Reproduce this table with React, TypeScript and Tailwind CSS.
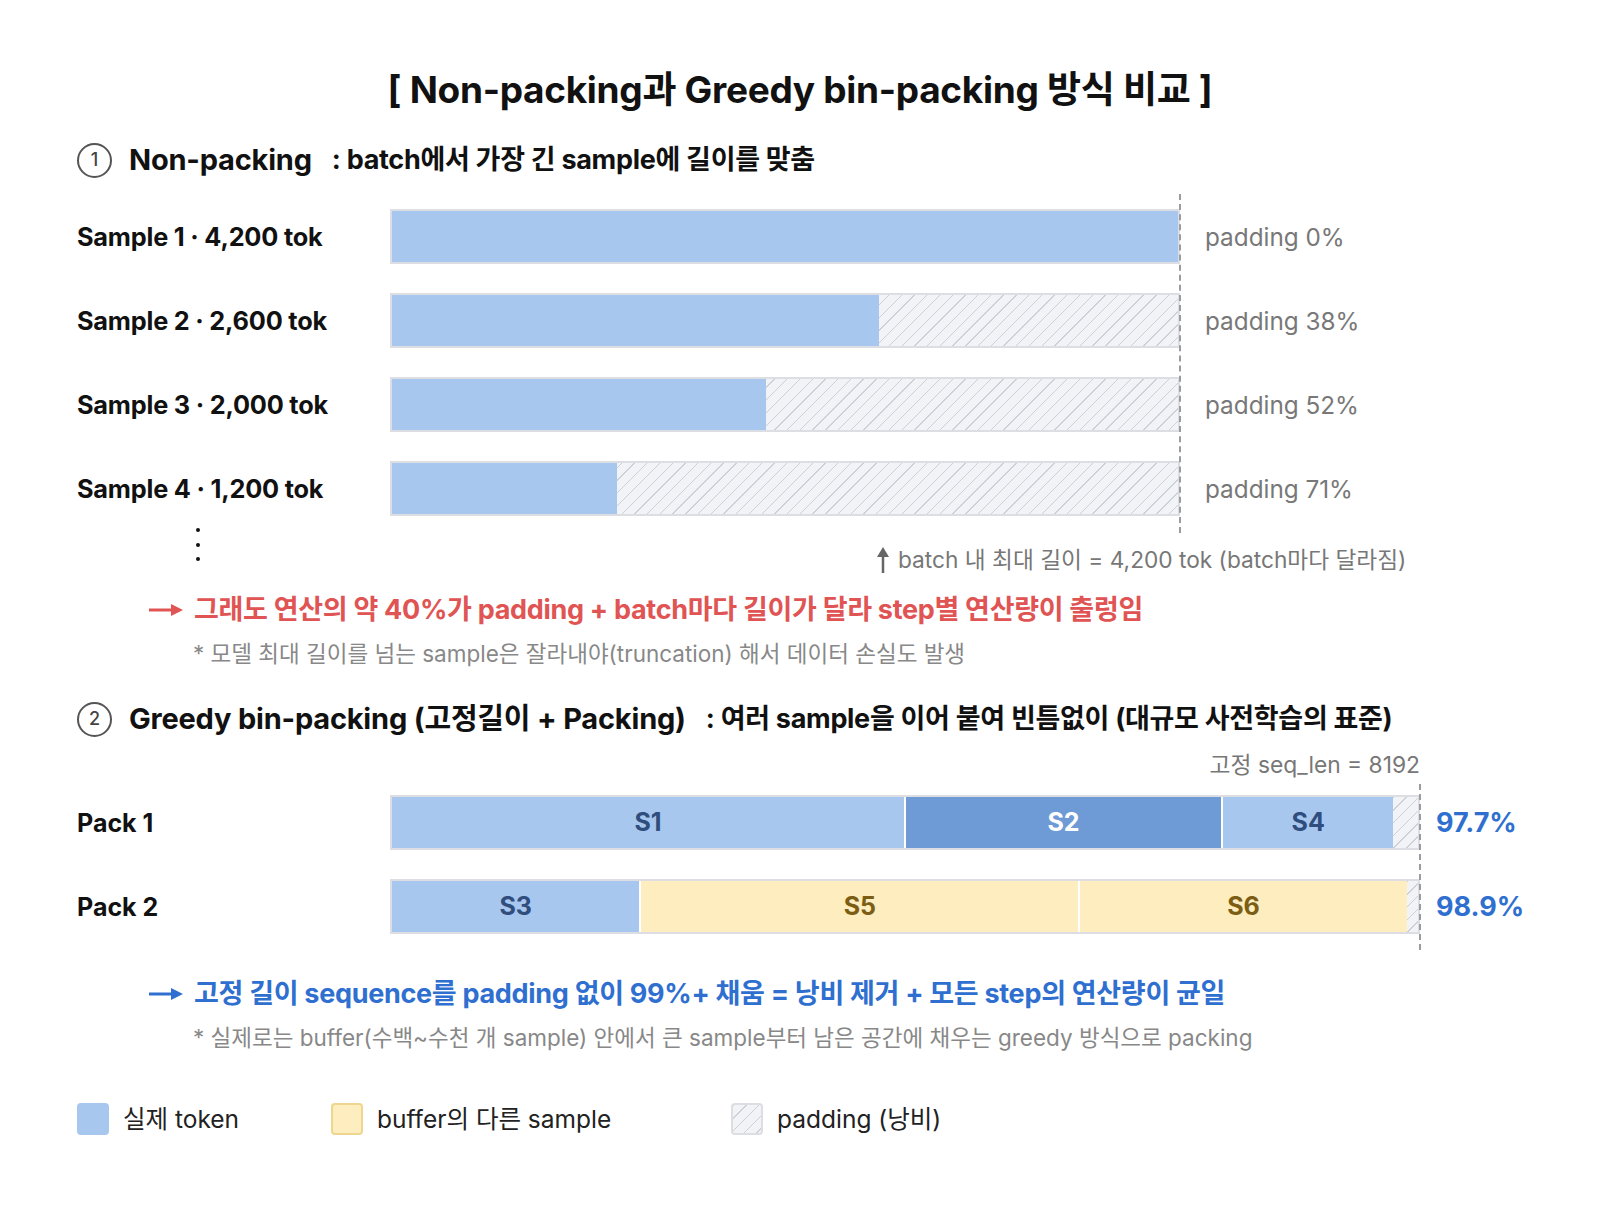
import type { ReactNode } from "react"

// 비교 도식: non-packing(샘플별 padding) vs greedy bin-packing(고정 길이 seq)

interface Seg {
  label?: string
  pct: number
  kind: "real" | "dark" | "buffer" | "pad"
}

const SAMPLES = [
  { name: "Sample 1 · 4,200 tok", real: 100, pad: "padding 0%" },
  { name: "Sample 2 · 2,600 tok", real: 62, pad: "padding 38%" },
  { name: "Sample 3 · 2,000 tok", real: 47.6, pad: "padding 52%" },
  { name: "Sample 4 · 1,200 tok", real: 28.6, pad: "padding 71%" },
]

const PACKS: { name: string; fill: string; segs: Seg[] }[] = [
  {
    name: "Pack 1",
    fill: "97.7%",
    segs: [
      { label: "S1", pct: 49.9, kind: "real" },
      { label: "S2", pct: 30.9, kind: "dark" },
      { label: "S4", pct: 16.8, kind: "real" },
      { pct: 2.4, kind: "pad" },
    ],
  },
  {
    name: "Pack 2",
    fill: "98.9%",
    segs: [
      { label: "S3", pct: 24.1, kind: "real" },
      { label: "S5", pct: 42.8, kind: "buffer" },
      { label: "S6", pct: 32, kind: "buffer" },
      { pct: 1.1, kind: "pad" },
    ],
  },
]

const HATCH =
  "bg-[repeating-linear-gradient(135deg,#cdd0d6_0px,#cdd0d6_1px,#f2f3f6_1px,#f2f3f6_9px)]"

const SEG_CLASS: Record<Seg["kind"], string> = {
  real: "bg-[#a8c7ef] text-[#2f4e7d]",
  dark: "bg-[#6e9bd5] text-white",
  buffer: "bg-[#fdedbf] text-[#7b5e14]",
  pad: HATCH,
}

function Circled({ n }: { n: number }) {
  return (
    <span className="flex h-[35px] w-[35px] shrink-0 items-center justify-center rounded-full border-2 border-[#555] text-[18px] font-medium leading-none text-[#444]">
      {n}
    </span>
  )
}

function Arrow({ color }: { color: string }) {
  return (
    <svg width="34" height="14" viewBox="0 0 34 14" className="shrink-0">
      <line x1="0" y1="7" x2="24" y2="7" stroke={color} strokeWidth="3" />
      <path d="M22 1 L34 7 L22 13 Z" fill={color} />
    </svg>
  )
}

function Header({ n, title, desc }: { n: number; title: string; desc: ReactNode }) {
  return (
    <div className="flex h-[40px] items-center leading-[40px]">
      <Circled n={n} />
      <span className="ml-[17px] text-[29px] font-bold tracking-[-0.2px] text-[#111]">{title}</span>
      <span className="ml-[20px] text-[27px] font-bold tracking-[-0.3px] text-[#111]">{desc}</span>
    </div>
  )
}

export default function App() {
  return (
    <div className="h-[1212px] w-[1600px] bg-white font-[Inter,'Noto_Sans_CJK_KR',sans-serif] text-[#111]">
      <div className="pt-[68px] text-center text-[37px] font-bold leading-[44px] tracking-[-0.3px]">
        [ Non-packing과 Greedy bin-packing 방식 비교 ]
      </div>

      <div className="pl-[77px]">
        {/* ① non-packing */}
        <div className="mt-[28px]">
          <Header n={1} title="Non-packing" desc=": batch에서 가장 긴 sample에 길이를 맞춤" />
        </div>

        <div className="relative mt-[29px] flex flex-col gap-[29px]">
          {SAMPLES.map((s) => (
            <div key={s.name} className="flex h-[55px] items-center">
              <span className="w-[313px] shrink-0 text-[25.3px] font-bold leading-[32px] tracking-[-0.2px]">{s.name}</span>
              <div className={`flex h-full w-[790px] border-2 border-[#dcdee3] ${HATCH}`}>
                <div className="h-full bg-[#a8c7ef]" style={{ width: `${s.real}%` }} />
              </div>
              <span className="ml-[25px] text-[24.3px] leading-[32px] text-[#787878]">{s.pad}</span>
            </div>
          ))}
          <div className="absolute -bottom-[17px] -top-[15px] left-[1102px] border-l-2 border-dashed border-[#9a9ca2]" />
        </div>

        <div className="mt-[12px] flex items-start">
          <div className="ml-[119px] flex flex-col gap-[10.5px]">
            <span className="h-[4px] w-[4px] rounded-full bg-[#111]" />
            <span className="h-[4px] w-[4px] rounded-full bg-[#111]" />
            <span className="h-[4px] w-[4px] rounded-full bg-[#111]" />
          </div>
          <div className="ml-[676px] mt-[18px] flex h-[28px] items-center gap-[8px] text-[22.7px] leading-[28px] text-[#777]">
            <svg width="14" height="26" viewBox="0 0 14 26" className="shrink-0">
              <line x1="7" y1="8" x2="7" y2="26" stroke="#666" strokeWidth="2.5" />
              <path d="M1 10 L7 0 L13 10 Z" fill="#666" />
            </svg>
            <span>batch 내 최대 길이 = 4,200 tok (batch마다 달라짐)</span>
          </div>
        </div>

        <div className="ml-[72px] mt-[20px] flex h-[32px] items-center gap-[11px]">
          <Arrow color="#e05454" />
          <span className="text-[27px] font-bold leading-[32px] tracking-[-0.3px] text-[#e05454]">
            그래도 연산의 약 40%가 padding + batch마다 길이가 달라 step별 연산량이 출렁임
          </span>
        </div>
        <div className="ml-[116px] mt-[14px] text-[22.5px] leading-[28px] text-[#888]">
          * 모델 최대 길이를 넘는 sample은 잘라내야(truncation) 해서 데이터 손실도 발생
        </div>

        {/* ② greedy bin-packing */}
        <div className="mt-[31px]">
          <Header
            n={2}
            title="Greedy bin-packing (고정길이 + Packing)"
            desc=": 여러 sample을 이어 붙여 빈틈없이 (대규모 사전학습의 표준)"
          />
        </div>

        <div className="mt-[13px] w-[1343px] text-right text-[22.8px] leading-[26px] text-[#777]">
          고정 seq_len = 8192
        </div>

        <div className="relative mt-[17px] flex flex-col gap-[29px]">
          {PACKS.map((p) => (
            <div key={p.name} className="flex h-[55px] items-center">
              <span className="w-[313px] shrink-0 text-[25px] font-bold leading-[32px]">{p.name}</span>
              <div className="flex h-full w-[1030px] border-2 border-[#dcdee3]">
                {p.segs.map((g, i) => (
                  <div
                    key={i}
                    className={`flex h-full items-center justify-center text-[25px] font-bold ${SEG_CLASS[g.kind]} ${
                      i > 0 && g.kind !== "pad" ? "border-l-2 border-white" : ""
                    }`}
                    style={{ width: `${g.pct}%` }}
                  >
                    {g.label}
                  </div>
                ))}
              </div>
              <span className="ml-[16px] text-[27px] font-bold leading-[32px] text-[#2f6fd0]">{p.fill}</span>
            </div>
          ))}
          <div className="absolute -bottom-[16px] -top-[11px] left-[1342px] border-l-2 border-dashed border-[#9a9ca2]" />
        </div>

        <div className="ml-[72px] mt-[44px] flex h-[32px] items-center gap-[11px]">
          <Arrow color="#2f6fd0" />
          <span className="text-[27px] font-bold leading-[32px] tracking-[-0.3px] text-[#2f6fd0]">
            고정 길이 sequence를 padding 없이 99%+ 채움 = 낭비 제거 + 모든 step의 연산량이 균일
          </span>
        </div>
        <div className="ml-[116px] mt-[14px] text-[22.5px] leading-[28px] text-[#888]">
          * 실제로는 buffer(수백~수천 개 sample) 안에서 큰 sample부터 남은 공간에 채우는 greedy 방식으로 packing
        </div>

        {/* legend */}
        <div className="mt-[51px] flex h-[32px] items-center text-[24.5px] leading-[32px] text-[#222]">
          <div className="flex w-[254px] items-center gap-[14px]">
            <span className="h-[32px] w-[32px] rounded-[4px] bg-[#a8c7ef]" />
            <span>실제 token</span>
          </div>
          <div className="flex w-[400px] items-center gap-[14px]">
            <span className="h-[32px] w-[32px] rounded-[4px] border-2 border-[#efd68e] bg-[#fdedbf]" />
            <span>buffer의 다른 sample</span>
          </div>
          <div className="flex items-center gap-[14px]">
            <span className={`h-[32px] w-[32px] rounded-[4px] border-2 border-[#dcdee3] ${HATCH}`} />
            <span>padding (낭비)</span>
          </div>
        </div>
      </div>
    </div>
  )
}
